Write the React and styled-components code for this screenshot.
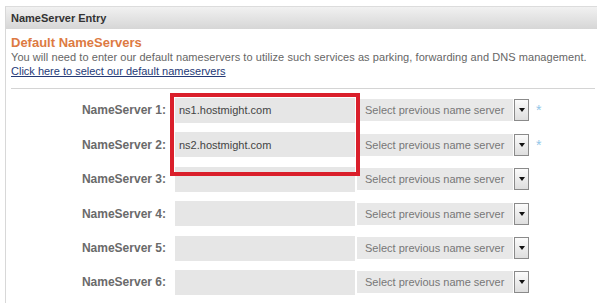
import React from "react";
import styled, { createGlobalStyle } from "styled-components";

const Global = createGlobalStyle`
  html, body { margin: 0; padding: 0; background: #fff; overflow: hidden; }
  body { font-family: "Liberation Sans", Arial, sans-serif; }
`;

const Panel = styled.div`
  margin: 6px 0 0 5px;
  width: 592px;
  height: 297px;
  overflow: hidden;
  border-top: 1px solid #dcdcdc;
  border-left: 1px solid #d8d8d8;
  box-sizing: border-box;
`;

const Header = styled.div`
  height: 22px;
  display: flex;
  align-items: center;
  padding-left: 5px;
  background: linear-gradient(#f1f1f1, #d6d6d6);
  font-size: 11px;
  font-weight: bold;
  color: #333;
`;

const Content = styled.div`
  padding: 6px 0 0 5px;
`;

const Title = styled.div`
  font-size: 13px;
  line-height: 15px;
  font-weight: bold;
  color: #dd7a42;
`;

const Desc = styled.div`
  font-size: 11px;
  line-height: 14px;
  letter-spacing: 0.06px;
  color: #666;
  white-space: nowrap;
`;

const Link = styled.a`
  display: block;
  font-size: 11px;
  line-height: 14px;
  color: #253a77;
  text-decoration: underline;
`;

const Separator = styled.div`
  margin: 10px 0 0 0;
  width: 584px;
  height: 1px;
  background: #d4d4d4;
`;

const Form = styled.div`
  position: relative;
  padding-top: 4.3px;
`;

const Row = styled.div`
  display: flex;
  align-items: center;
  height: 34.4px;
`;

const Label = styled.div`
  width: 160px;
  margin-right: 9px;
  text-align: right;
  font-size: 12px;
  font-weight: bold;
  color: #6a6a6a;
`;

const Input = styled.div`
  width: 180px;
  height: 25px;
  background: #e6e6e6;
  box-sizing: border-box;
  padding-left: 4px;
  display: flex;
  align-items: center;
  font-size: 11px;
  color: #444;
`;

const Select = styled.div`
  margin-left: 2px;
  width: 156px;
  height: 22px;
  background: #e8e8e8;
  box-sizing: border-box;
  padding-left: 8px;
  display: flex;
  align-items: center;
  font-size: 11px;
  color: #777;
`;

const DropButton = styled.div`
  margin-left: 1px;
  width: 15px;
  height: 22px;
  box-sizing: border-box;
  border: 1px solid #8a8a8a;
  background: linear-gradient(#fbfbfb, #dedede);
  display: flex;
  align-items: center;
  justify-content: center;
`;

const Arrow = styled.span`
  width: 0;
  height: 0;
  border-left: 3px solid transparent;
  border-right: 3px solid transparent;
  border-top: 4px solid #111;
`;

const Required = styled.span`
  margin-left: 7px;
  font-size: 14px;
  color: #92c6e8;
  line-height: 1;
`;

const Highlight = styled.div`
  position: absolute;
  left: 164px;
  top: 4px;
  width: 190px;
  height: 83px;
  border: 4px solid #da1f2b;
  box-sizing: border-box;
  pointer-events: none;
`;

const rows = [
  { n: 1, value: "ns1.hostmight.com", req: true },
  { n: 2, value: "ns2.hostmight.com", req: true },
  { n: 3, value: "" },
  { n: 4, value: "" },
  { n: 5, value: "" },
  { n: 6, value: "" },
];

export default function App() {
  return (
    <>
      <Global />
      <Panel>
        <Header>NameServer Entry</Header>
        <Content>
          <Title>Default NameServers</Title>
          <Desc>
            You will need to enter our default nameservers to utilize such services as parking, forwarding and DNS management.
          </Desc>
          <Link href="#">Click here to select our default nameservers</Link>
          <Separator />
        </Content>
        <Form>
          {rows.map((r) => (
            <Row key={r.n}>
              <Label>NameServer {r.n}:</Label>
              <Input>{r.value}</Input>
              <Select>Select previous name server</Select>
              <DropButton>
                <Arrow />
              </DropButton>
              {r.req && <Required>*</Required>}
            </Row>
          ))}
          <Highlight />
        </Form>
      </Panel>
    </>
  );
}
